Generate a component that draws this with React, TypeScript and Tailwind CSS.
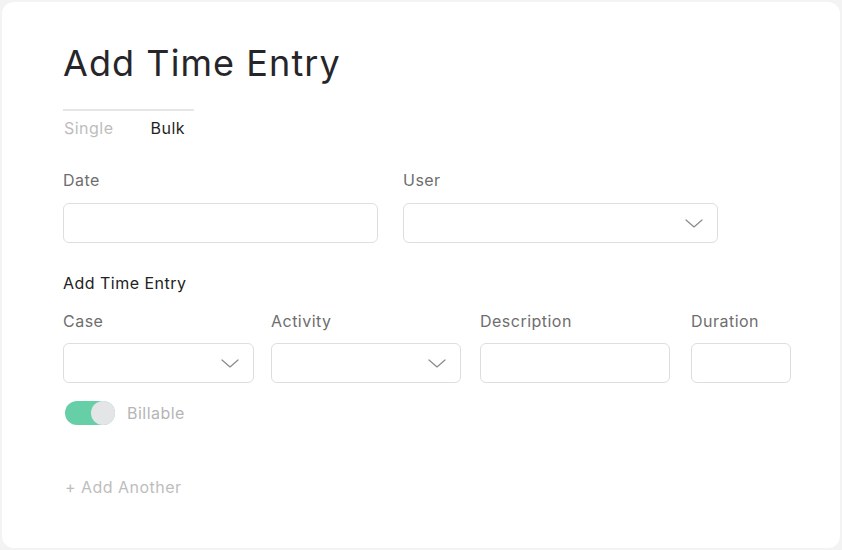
import React from 'react';

const font = { fontFamily: 'Inter, "Noto Sans", sans-serif' };

function Chevron() {
    return (
        <svg width="18" height="9" viewBox="0 0 18 9" fill="none">
            <polyline points="1,1 9,8 17,1" stroke="#8a8a8a" strokeWidth="1.2" strokeLinecap="round" strokeLinejoin="round" />
        </svg>
    );
}

function Field({ label, select, width, gap = 'mb-[10px]' }: { label: string; select?: boolean; width: string; gap?: string }) {
    return (
        <div>
            <div className={`text-[16px] leading-6 tracking-[0.03em] text-[#6e6e6e] ${gap}`}>{label}</div>
            <div className={`${width} h-10 rounded-md border border-[#dedede] bg-white flex items-center justify-end pr-[14px]`}>
                {select && <Chevron />}
            </div>
        </div>
    );
}

function App() {
    return (
        <div className="w-[842px] h-[550px] bg-[#f3f3f3] p-[2px]" style={font}>
            <div className="h-[546px] bg-white rounded-xl pl-[61px] pt-[41px]">
                <h1 className="text-[36px] leading-10 font-normal text-[#26262a] tracking-[0.03em]">Add Time Entry</h1>

                <div className="mt-[26px] w-[131px] border-t-2 border-[#e6e6e6] pt-[5px] flex text-[16px] leading-6 tracking-[0.03em]">
                    <span className="ml-[1px] text-[#bdbdbd]">Single</span>
                    <span className="ml-[37px] text-[#1f1f1f]">Bulk</span>
                </div>

                <div className="mt-[28px] grid grid-cols-[340px_315px]">
                    <Field label="Date" width="w-[315px]" gap="mb-[11px]" />
                    <Field label="User" width="w-[315px]" gap="mb-[11px]" select />
                </div>

                <div className="mt-[28px] text-[16px] leading-6 tracking-[0.03em] text-[#222]">Add Time Entry</div>

                <div className="mt-[14px] grid grid-cols-[208px_209px_211px_100px]">
                    <Field label="Case" width="w-[191px]" select />
                    <Field label="Activity" width="w-[190px]" select />
                    <Field label="Description" width="w-[190px]" />
                    <Field label="Duration" width="w-[100px]" />
                </div>

                <div className="mt-[18px] flex items-center">
                    <div className="ml-[2px] w-[50px] h-6 rounded-full bg-[#66cfa8] flex justify-end">
                        <div className="w-6 h-6 rounded-full bg-[#e4e5e7]" />
                    </div>
                    <span className="ml-[12px] text-[16px] leading-6 tracking-[0.03em] text-[#b5b5b5]">Billable</span>
                </div>

                <div className="mt-[50px] ml-[2px] text-[16px] leading-6 tracking-[0.03em] text-[#bdbdbd]">+ Add Another</div>
            </div>
        </div>
    );
}

export default App;
